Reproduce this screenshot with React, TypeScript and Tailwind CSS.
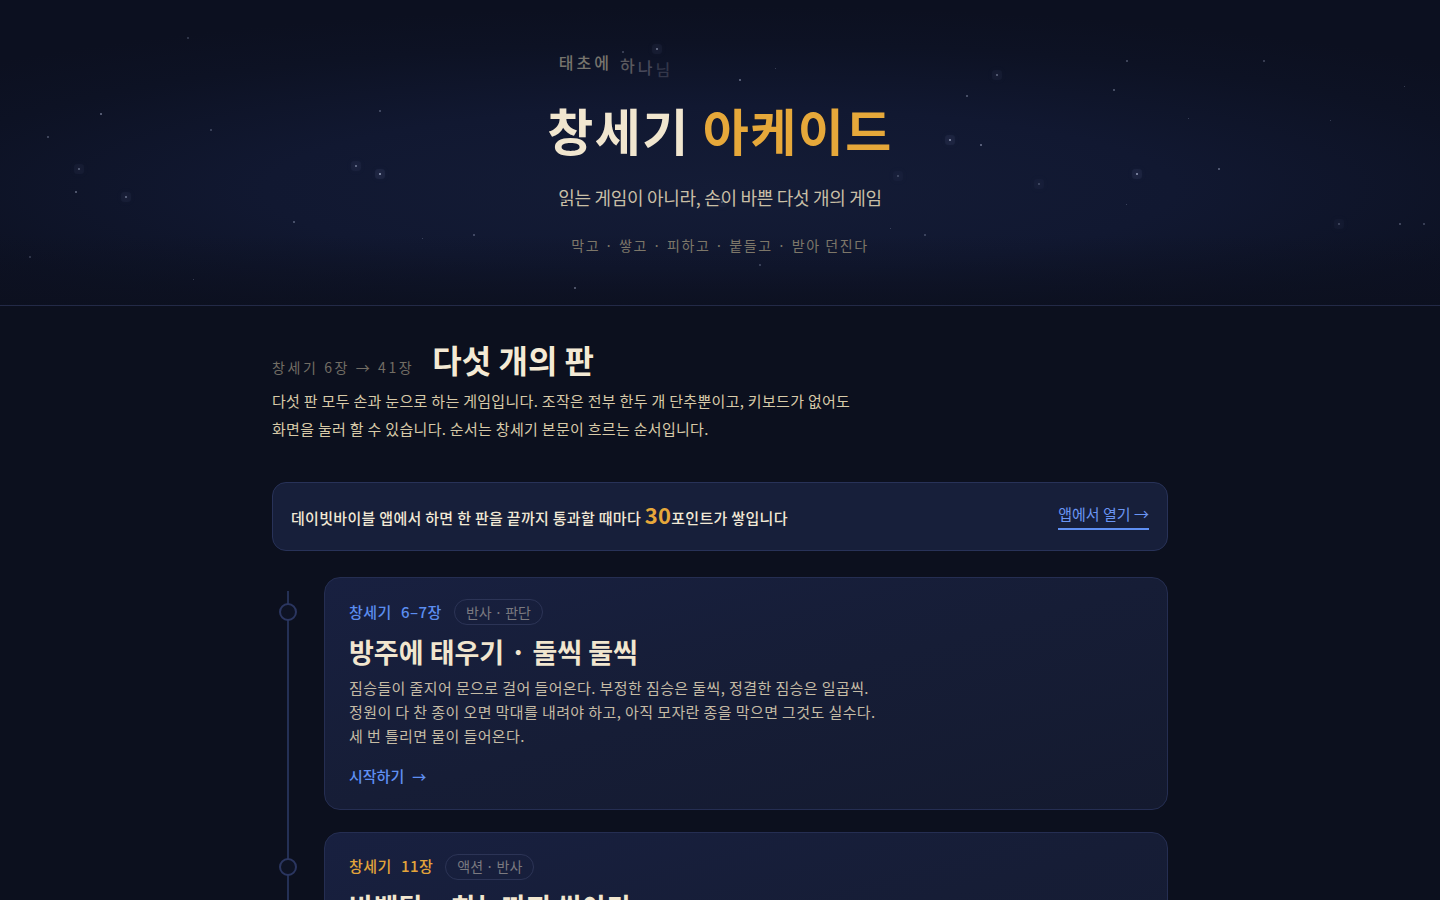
import React from "react";

const stars: { x: number; y: number; s: number; o: number; glow?: boolean }[] = [
  { x: 48, y: 137, s: 1.5, o: 0.35 },
  { x: 101, y: 114, s: 2, o: 0.5 },
  { x: 79, y: 169, s: 2, o: 0.45, glow: true },
  { x: 76, y: 192, s: 2, o: 0.45 },
  { x: 126, y: 197, s: 2, o: 0.5, glow: true },
  { x: 188, y: 38, s: 1.5, o: 0.25 },
  { x: 211, y: 130, s: 1.5, o: 0.3 },
  { x: 294, y: 222, s: 1.5, o: 0.4 },
  { x: 356, y: 166, s: 2, o: 0.55, glow: true },
  { x: 380, y: 174, s: 2.5, o: 0.75, glow: true },
  { x: 380, y: 111, s: 1.5, o: 0.35 },
  { x: 422, y: 238, s: 1, o: 0.3 },
  { x: 474, y: 235, s: 1.5, o: 0.35 },
  { x: 575, y: 288, s: 1.5, o: 0.45 },
  { x: 623, y: 52, s: 1.5, o: 0.3 },
  { x: 657, y: 49, s: 2.5, o: 0.55, glow: true },
  { x: 740, y: 80, s: 1.5, o: 0.5 },
  { x: 775, y: 68, s: 1, o: 0.3 },
  { x: 722, y: 202, s: 2, o: 0.35, glow: true },
  { x: 890, y: 228, s: 1, o: 0.3 },
  { x: 898, y: 176, s: 2, o: 0.3, glow: true },
  { x: 925, y: 235, s: 1.5, o: 0.3 },
  { x: 950, y: 140, s: 2.5, o: 0.7, glow: true },
  { x: 981, y: 145, s: 1.5, o: 0.5 },
  { x: 997, y: 75, s: 2, o: 0.45, glow: true },
  { x: 967, y: 96, s: 1.5, o: 0.4 },
  { x: 1039, y: 184, s: 2, o: 0.3, glow: true },
  { x: 1114, y: 90, s: 1.5, o: 0.4 },
  { x: 1137, y: 174, s: 2.5, o: 0.7, glow: true },
  { x: 1127, y: 61, s: 1.5, o: 0.35 },
  { x: 1188, y: 118, s: 1, o: 0.3 },
  { x: 1219, y: 169, s: 1.5, o: 0.45 },
  { x: 1126, y: 204, s: 1, o: 0.3 },
  { x: 1264, y: 61, s: 1.5, o: 0.3 },
  { x: 1330, y: 120, s: 1, o: 0.3 },
  { x: 1339, y: 224, s: 2, o: 0.3, glow: true },
  { x: 1404, y: 86, s: 1, o: 0.3 },
  { x: 1400, y: 224, s: 1.5, o: 0.35 },
  { x: 1424, y: 224, s: 2, o: 0.3 },
  { x: 30, y: 257, s: 1.5, o: 0.25 },
  { x: 193, y: 279, s: 1, o: 0.3 },
  { x: 760, y: 265, s: 1.5, o: 0.3 },
];

function Star({ x, y, s, o, glow }: { x: number; y: number; s: number; o: number; glow?: boolean }) {
  return (
    <span
      className="pointer-events-none absolute rounded-full bg-[#c9d2ee]"
      style={{
        left: x - s / 2,
        top: y - s / 2,
        width: s,
        height: s,
        opacity: o,
        boxShadow: glow ? "0 0 0 4px rgba(120,135,180,0.12), 0 0 6px 3px rgba(120,135,180,0.12)" : undefined,
      }}
    />
  );
}

const font = { fontFamily: '"Noto Sans CJK KR", "Noto Sans", sans-serif' };

function Tag({ children }: { children: React.ReactNode }) {
  return (
    <span className="inline-flex h-[26px] items-center rounded-full border border-[#2c3456] px-[11px] text-[14px] text-[#7b7a80]">
      {children}
    </span>
  );
}

function GameCard({
  book,
  chapter,
  refColor,
  tag,
  title,
  lines,
}: {
  book: string;
  chapter: string;
  refColor: string;
  tag: string;
  title: string;
  lines: string[];
}) {
  return (
    <div className="flex gap-[36px]">
      <div className="relative w-[16px] shrink-0">
        <span className="absolute left-[7px] top-[26px] h-[18px] w-[18px] rounded-full border-2 border-[#2b3660] bg-[#0e1324]" />
      </div>
      <article className="flex-1 rounded-[16px] border border-[#252e52] bg-gradient-to-br from-[#182040] via-[#161d36] to-[#141a2f] px-[24px] pb-[21px] pt-[21px]">
        <div className="flex items-center gap-[12px]">
          <span className={`flex gap-[9px] text-[15px] font-medium tracking-[0.5px] ${refColor}`}>
            <span>{book}</span>
            <span>{chapter}</span>
          </span>
          <Tag>{tag}</Tag>
        </div>
        <h3 className="mt-[9px] text-[27px] font-bold leading-[36px] text-[#f1e6cf]">{title}</h3>
        <div className="mt-[6px] text-[15px] leading-[24px] tracking-[0.4px] text-[#c5bba5]">
          {lines.map((l) => (
            <p key={l}>{l}</p>
          ))}
        </div>
        <a className="mt-[17px] inline-flex items-center gap-[8px] text-[15px] font-medium text-[#5f8ff2]">
          시작하기 <span className="text-[14px]">→</span>
        </a>
      </article>
    </div>
  );
}

export default function App() {
  return (
    <div className="min-h-screen bg-[#0c101e] text-[#efe6d2]" style={font}>
      <header className="relative overflow-hidden border-b border-[#232a47] bg-[#0c1020]">
        <div className="pointer-events-none absolute inset-0 bg-[radial-gradient(ellipse_70%_60%_at_50%_62%,#141c36_0%,#111831_45%,#0d1224_80%,#0c1020_100%)]" />
        <div className="pointer-events-none absolute inset-x-0 bottom-0 h-[70px] bg-gradient-to-b from-transparent to-[#0c101f]/80" />
        {stars.map((s, i) => (
          <Star key={i} {...s} />
        ))}
        <div className="relative flex h-[305px] flex-col items-center pt-[50px]">
          <div className="flex -translate-x-[104px] items-start text-[16px] font-medium tracking-[3px]">
            <span className="text-[#77746d]">태초에</span>
            <span className="ml-[8px] mt-[3px] text-[#5b5a5e]">하</span>
            <span className="mt-[5px] text-[#47495a]">나</span>
            <span className="mt-[7px] text-[#33374a]">님</span>
          </div>
          <h1 className="mt-[17px] text-[50px] font-bold leading-[62px] tracking-[1.5px]">
            <span className="text-[#f1e6cf]">창세기</span>{" "}
            <span className="text-[#e6a83a]">아케이드</span>
          </h1>
          <p className="mt-[24px] text-[18px] tracking-[-0.3px] text-[#c9bfa6]">
            읽는 게임이 아니라, 손이 바쁜 다섯 개의 게임
          </p>
          <p className="mt-[24px] text-[14px] tracking-[1.6px] text-[#7d7769]">
            막고 · 쌓고 · 피하고 · 붙들고 · 받아 던진다
          </p>
        </div>
      </header>

      <main className="mx-auto w-[896px] pt-[32px]">
        <div className="flex items-baseline gap-[18px]">
          <span className="text-[14px] tracking-[2.6px] text-[#726d64]">창세기 6장 → 41장</span>
          <h2 className="text-[32px] font-bold leading-[42px] text-[#f4ead5]">다섯 개의 판</h2>
        </div>
        <p className="mt-[7px] w-[600px] break-keep text-[15px] leading-[28px] tracking-[0.3px] text-[#d8caa8]">
          다섯 판 모두 손과 눈으로 하는 게임입니다. 조작은 전부 한두 개 단추뿐이고, 키보드가 없어도 화면을 눌러 할 수
          있습니다. 순서는 창세기 본문이 흐르는 순서입니다.
        </p>

        <div className="mt-[39px] flex h-[69px] items-center justify-between rounded-[14px] border border-[#283258] bg-[#171f3a] px-[18px]">
          <p className="flex items-baseline text-[15px] font-medium tracking-[0.3px] text-[#f2e9d6]">
            데이빗바이블 앱에서 하면 한 판을 끝까지 통과할 때마다&nbsp;
            <span className="text-[22px] font-bold leading-none text-[#e6a83a]">30</span>포인트가 쌓입니다
          </p>
          <a className="border-b-2 border-[#5f8ff2] pb-[2px] text-[15px] text-[#6a95f3]">앱에서 열기 →</a>
        </div>

        <div className="relative mt-[26px] flex flex-col gap-[22px]">
          <span className="absolute bottom-0 left-[15px] top-[14px] w-[2px] bg-[#243055]" />
          <GameCard
            book="창세기"
            chapter="6–7장"
            refColor="text-[#5b8def]"
            tag={"반사\u2009·\u2009판단"}
            title="방주에 태우기 · 둘씩 둘씩"
            lines={[
              "짐승들이 줄지어 문으로 걸어 들어온다. 부정한 짐승은 둘씩, 정결한 짐승은 일곱씩.",
              "정원이 다 찬 종이 오면 막대를 내려야 하고, 아직 모자란 종을 막으면 그것도 실수다.",
              "세 번 틀리면 물이 들어온다.",
            ]}
          />
          <GameCard
            book="창세기"
            chapter="11장"
            refColor="text-[#e3a43a]"
            tag={"액션\u2009·\u2009반사"}
            title="바벨탑 · 하늘까지 쌓아라"
            lines={[
              "사람들이 벽돌을 구워 탑을 쌓는다. 흔들리는 벽돌이 내려올 때 알맞게 멈춰 세워야 한다.",
              "어긋난 만큼 깎여 나가고, 폭이 다 사라지면 탑은 거기서 멈춘다.",
              "말이 뒤섞이기 전에 최대한 높이 올려라.",
            ]}
          />
        </div>
        <div className="h-[80px]" />
      </main>
    </div>
  );
}
